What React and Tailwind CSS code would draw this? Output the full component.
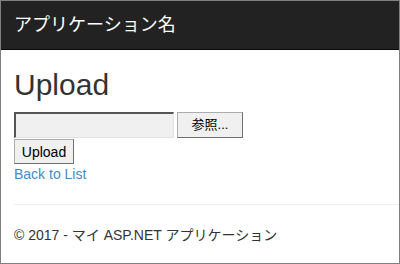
export default function App() {
  const jp = { fontFamily: '"Liberation Sans", "Noto Sans CJK JP", sans-serif' };

  return (
    <div
      className="w-[400px] h-[264px] border border-[#808080] bg-white text-[#333] overflow-hidden flex flex-col"
      style={jp}
    >
      <div className="h-[49px] shrink-0 bg-[#222] border-b border-[#080808] flex items-center pl-[13px]">
        <span className="text-[18px] leading-[20px] text-white">アプリケーション名</span>
      </div>

      <div className="px-[13px]">
        <h2 className="mt-[18px] mb-[11px] text-[30px] leading-[33px] font-normal">Upload</h2>

        <div className="flex items-start gap-[3px]">
          <div className="w-[160px] h-[26px] bg-[#f0f0f0] border-t-2 border-l-2 border-[#555] border-r border-b border-r-[#e3e3e3] border-b-[#e3e3e3]" />
          <button className="w-[66px] h-[26px] bg-[#f0f0f0] border border-[#adadad] border-r-[#707070] border-b-[#707070] text-[13px] leading-[16px] text-black">
            参照...
          </button>
        </div>

        <button className="mt-[1px] w-[60px] h-[25px] bg-[#f0f0f0] border border-[#adadad] border-r-[#707070] border-b-[#707070] text-[14px] leading-[16px] text-black">
          Upload
        </button>

        <div className="text-[14px] leading-[20px]">
          <a className="text-[#428bca]">Back to List</a>
        </div>

        <hr className="mt-[20px] border-t border-[#eee] -mr-[13px]" />

        <p className="mt-[20px] text-[14px] leading-[20px]">© 2017 - マイ ASP.NET アプリケーション</p>
      </div>
    </div>
  );
}
